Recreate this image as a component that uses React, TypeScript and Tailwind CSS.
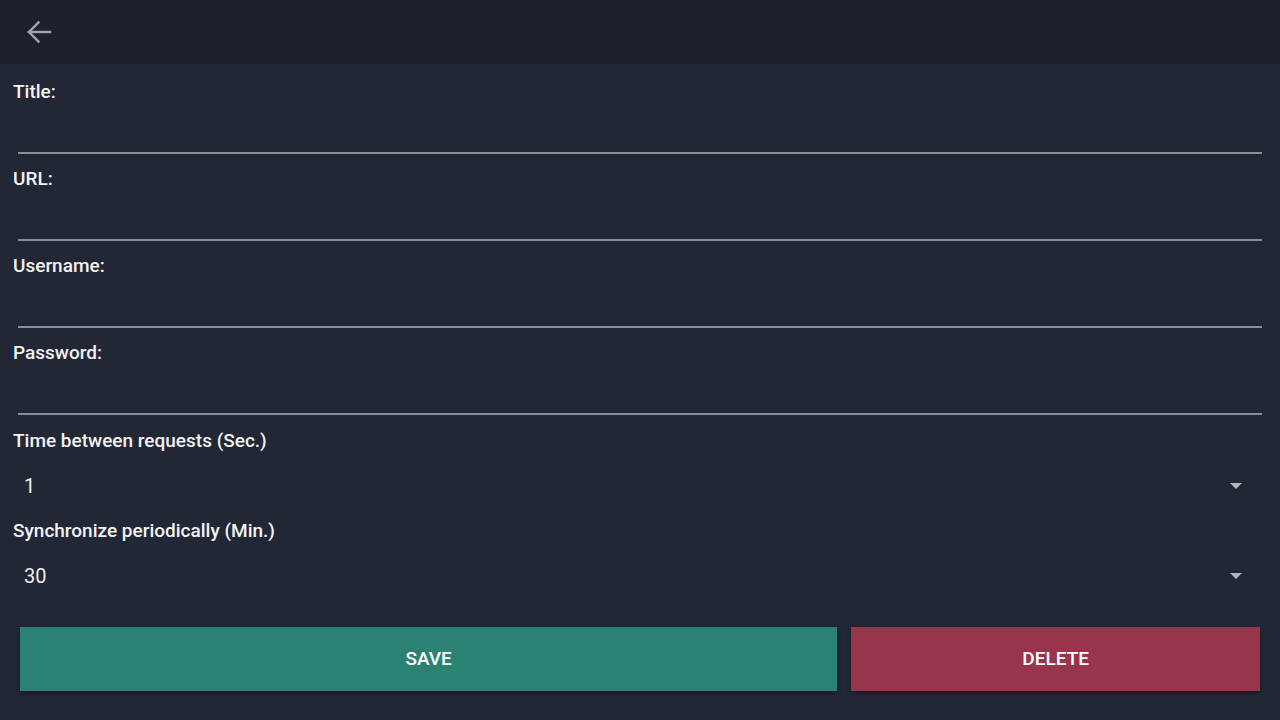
import { ChangeEvent, useState } from 'react'

type Field = { key: string; label: string; type: string }

const fields: Field[] = [
  { key: 'title', label: 'Title:', type: 'text' },
  { key: 'url', label: 'URL:', type: 'text' },
  { key: 'username', label: 'Username:', type: 'text' },
  { key: 'password', label: 'Password:', type: 'password' },
]

const selects = [
  { key: 'delay', label: 'Time between requests (Sec.)', value: '1', options: ['1', '2', '5', '10'] },
  { key: 'sync', label: 'Synchronize periodically (Min.)', value: '30', options: ['15', '30', '60'] },
]

function BackIcon() {
  return (
    <svg width="26" height="24" viewBox="0 0 26 24" fill="none" stroke="#a2a5ad" strokeWidth="2.4" strokeLinecap="square">
      <path d="M3 12h21" />
      <path d="M12.5 2.5 3 12l9.5 9.5" />
    </svg>
  )
}

export default function App() {
  const [values, setValues] = useState<Record<string, string>>({})

  function update(key: string) {
    return (e: ChangeEvent<HTMLInputElement>) => setValues((v) => ({ ...v, [key]: e.target.value }))
  }

  return (
    <div className="min-h-screen w-full bg-[#222736] font-['Roboto',sans-serif] text-[#f2f2f2]">
      <header className="flex h-16 items-center bg-[#1e212c] pl-[26px]">
        <button className="flex items-center">
          <BackIcon />
        </button>
      </header>

      <div className="flex flex-col px-[13px] pt-[18px]">
        {fields.map((f, i) => (
          <div key={f.key} className={i > 0 ? 'mt-[15px]' : ''}>
            <label className="block text-[19px] leading-5 font-medium">{f.label}</label>
            <input
              type={f.type}
              value={values[f.key] ?? ''}
              onChange={update(f.key)}
              className="mx-[5px] block h-[52px] w-[calc(100%-10px)] border-b-2 border-[#8a8d96] bg-transparent px-2 text-[18px] text-white outline-none"
            />
          </div>
        ))}

        {selects.map((s, i) => (
          <div key={s.key} className={i === 0 ? 'mt-4' : 'mt-[10px]'}>
            <label className="block text-[19px] leading-5 font-medium">{s.label}</label>
            <div className="mt-[10px] flex h-[50px] items-center justify-between pl-[11px] pr-[25px]">
              <span className="text-[20px] text-[#ececec]">{s.value}</span>
              <span className="h-0 w-0 border-x-[6px] border-t-[6px] border-x-transparent border-t-[#b3b5bb]" />
            </div>
          </div>
        ))}
      </div>

      <div className="mt-[26px] flex gap-[14px] px-5">
        <button className="h-16 flex-[2] bg-[#2c8272] text-[19px] font-medium text-white shadow-[0_2px_4px_rgba(0,0,0,0.35)]">
          SAVE
        </button>
        <button className="h-16 flex-1 bg-[#98344c] text-[19px] font-medium text-white shadow-[0_2px_4px_rgba(0,0,0,0.35)]">
          DELETE
        </button>
      </div>
    </div>
  )
}
